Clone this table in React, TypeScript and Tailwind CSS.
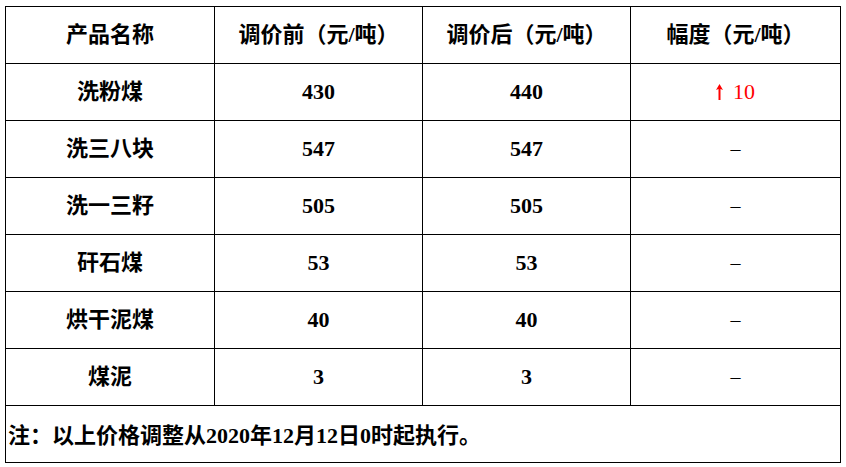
const rows = [
  { name: "洗粉煤", before: "430", after: "440", change: "10" },
  { name: "洗三八块", before: "547", after: "547", change: "" },
  { name: "洗一三籽", before: "505", after: "505", change: "" },
  { name: "矸石煤", before: "53", after: "53", change: "" },
  { name: "烘干泥煤", before: "40", after: "40", change: "" },
  { name: "煤泥", before: "3", after: "3", change: "" },
]

const cell = "flex items-center justify-center border-r border-b border-black h-[57px]"

function UpArrow() {
  return (
    <svg width="7" height="16" viewBox="0 0 7 16" className="mr-[10px]">
      <path d="M3.5 0 L7 6 L4.5 5 L4.5 16 L2.5 16 L2.5 5 L0 6 Z" fill="#ff0000" />
    </svg>
  )
}

export default function App() {
  return (
    <div
      className="w-[846px] h-[467px] bg-white text-black pt-[6px] pl-[5px]"
      style={{ fontFamily: '"Liberation Serif", "Noto Sans CJK SC", serif' }}
    >
      <div className="w-[836px] border-l border-t border-black grid grid-cols-[209px_208px_208px_210px] text-[22px] font-bold leading-none">
        <div className={cell}>产品名称</div>
        <div className={cell}>调价前（元/吨）</div>
        <div className={cell}>调价后（元/吨）</div>
        <div className={cell}>幅度（元/吨）</div>

        {rows.map((r) => (
          <div key={r.name} className="contents">
            <div className={cell}>{r.name}</div>
            <div className={cell}>{r.before}</div>
            <div className={cell}>{r.after}</div>
            <div className={cell}>
              {r.change ? (
                <span className="flex items-center text-[#ff0000] font-normal">
                  <UpArrow />
                  {r.change}
                </span>
              ) : (
                <span className="font-normal text-[20px]">–</span>
              )}
            </div>
          </div>
        ))}

        <div className="col-span-4 flex items-center border-r border-b border-black h-[57px] pl-[2px] pt-[4px]">
          注：以上价格调整从2020年12月12日0时起执行。
        </div>
      </div>
    </div>
  )
}
